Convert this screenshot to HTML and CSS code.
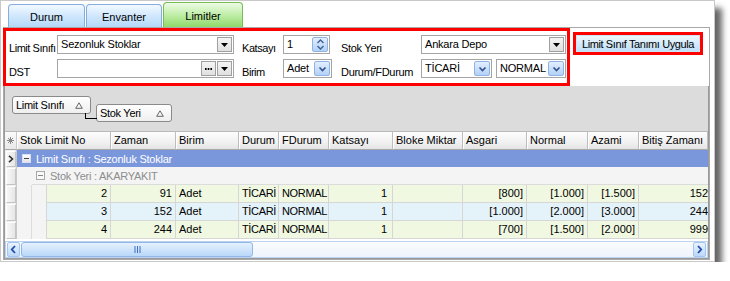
FILE: index.html
```html
<!DOCTYPE html>
<html lang="tr">
<head>
<meta charset="utf-8">
<title>Limitler</title>
<link rel="stylesheet" href="styles.css">
</head>
<body>
<div class="window">
  <div class="tabs">
    <div class="tab">Durum</div>
    <div class="tab">Envanter</div>
    <div class="tab active">Limitler</div>
  </div>
  <div class="page">
    <div class="toolbar">
      <div class="form hl">
        <span class="lbl">Limit Sınıfı</span>
        <div class="edit"><span class="val">Sezonluk Stoklar</span><span class="cbtn"><svg width="7" height="4" viewBox="0 0 7 4"><path d="M0 0H7L3.5 4Z" fill="#000"/></svg></span></div>
        <span class="lbl l2">Katsayı</span>
        <div class="edit spin"><span class="val">1</span><span class="xbtn"><svg width="9" height="13" viewBox="0 0 9 13"><path d="M1.5 5L4.5 2L7.5 5M1.5 8L4.5 11L7.5 8" fill="none" stroke="#3f5f9a" stroke-width="1.4"/></svg></span></div>
        <span class="lbl l3">Stok Yeri</span>
        <div class="edit"><span class="val">Ankara Depo</span><span class="cbtn"><svg width="7" height="4" viewBox="0 0 7 4"><path d="M0 0H7L3.5 4Z" fill="#000"/></svg></span></div>

        <span class="lbl">DST</span>
        <div class="edit"><span class="val"></span><span class="cbtn dots"><svg width="7" height="2" viewBox="0 0 7 2"><rect x="0" y="0" width="1.6" height="2" fill="#000"/><rect x="2.7" y="0" width="1.6" height="2" fill="#000"/><rect x="5.4" y="0" width="1.6" height="2" fill="#000"/></svg></span><span class="cbtn"><svg width="7" height="4" viewBox="0 0 7 4"><path d="M0 0H7L3.5 4Z" fill="#000"/></svg></span></div>
        <span class="lbl l2">Birim</span>
        <div class="edit adet"><span class="val">Adet</span><span class="xbtn"><svg width="9" height="6" viewBox="0 0 9 6"><path d="M1.5 1.5L4.5 4.5L7.5 1.5" fill="none" stroke="#2f4f8f" stroke-width="1.6"/></svg></span></div>
        <span class="lbl l3">Durum/FDurum</span>
        <div class="pair">
          <div class="edit ticari"><span class="val">TİCARİ</span><span class="xbtn"><svg width="9" height="6" viewBox="0 0 9 6"><path d="M1.5 1.5L4.5 4.5L7.5 1.5" fill="none" stroke="#2f4f8f" stroke-width="1.6"/></svg></span></div>
          <div class="edit normal"><span class="val">NORMAL</span><span class="xbtn"><svg width="9" height="6" viewBox="0 0 9 6"><path d="M1.5 1.5L4.5 4.5L7.5 1.5" fill="none" stroke="#2f4f8f" stroke-width="1.6"/></svg></span></div>
        </div>
      </div>
      <div class="hl btnbox"><div class="apply">Limit Sınıf Tanımı Uygula</div></div>
    </div>

    <div class="grid">
      <div class="grouppanel">
        <div class="gbox first"><span>Limit Sınıfı</span><svg width="8" height="7" viewBox="0 0 8 7"><path d="M4 0.8L7.3 6.3H0.7Z" fill="none" stroke="#666" stroke-width="1"/></svg></div>
        <div class="gbox second"><span>Stok Yeri</span><svg width="8" height="7" viewBox="0 0 8 7"><path d="M4 0.8L7.3 6.3H0.7Z" fill="none" stroke="#666" stroke-width="1"/></svg></div>
      </div>

      <div class="row hdr">
        <div class="ind"><svg width="7" height="7" viewBox="0 0 7 7"><path d="M3.5 0V7M0 3.5H7M1 1L6 6M6 1L1 6" stroke="#888" stroke-width="1"/></svg></div>
        <div class="c c1">Stok Limit No</div>
        <div class="c c2">Zaman</div>
        <div class="c c3">Birim</div>
        <div class="c c4">Durum</div>
        <div class="c c5">FDurum</div>
        <div class="c c6">Katsayı</div>
        <div class="c c7">Bloke Miktar</div>
        <div class="c c8">Asgari</div>
        <div class="c c9">Normal</div>
        <div class="c c10">Azami</div>
        <div class="c c11">Bitiş Zamanı</div>
      </div>

      <div class="row grp1">
        <div class="ind"><span class="ibtn"><svg width="6" height="8" viewBox="0 0 6 8"><path d="M1 0.8L4.5 4L1 7.2" fill="none" stroke="#333" stroke-width="1.6"/></svg></span></div>
        <div class="gcell"><span class="exp"></span>Limit Sınıfı : Sezonluk Stoklar</div>
      </div>

      <div class="row grp2">
        <div class="ind"><span class="ibtn"></span></div>
        <div class="indent"></div>
        <div class="gcell"><span class="exp"></span>Stok Yeri : AKARYAKIT</div>
      </div>

      <div class="row data green">
        <div class="ind"><span class="ibtn"></span></div>
        <div class="indent"></div><div class="indent"></div>
        <div class="c d1 r">2</div><div class="c c2 r">91</div><div class="c c3">Adet</div><div class="c c4">TİCARİ</div><div class="c c5">NORMAL</div><div class="c c6 r k">1</div><div class="c c7"></div><div class="c c8 r">[800]</div><div class="c c9 r">[1.000]</div><div class="c c10 r">[1.500]</div><div class="c c11 r e">152</div>
      </div>
      <div class="row data blue">
        <div class="ind"><span class="ibtn"></span></div>
        <div class="indent"></div><div class="indent"></div>
        <div class="c d1 r">3</div><div class="c c2 r">152</div><div class="c c3">Adet</div><div class="c c4">TİCARİ</div><div class="c c5">NORMAL</div><div class="c c6 r k">1</div><div class="c c7"></div><div class="c c8 r">[1.000]</div><div class="c c9 r">[2.000]</div><div class="c c10 r">[3.000]</div><div class="c c11 r e">244</div>
      </div>
      <div class="row data green">
        <div class="ind"><span class="ibtn"></span></div>
        <div class="indent"></div><div class="indent"></div>
        <div class="c d1 r">4</div><div class="c c2 r">244</div><div class="c c3">Adet</div><div class="c c4">TİCARİ</div><div class="c c5">NORMAL</div><div class="c c6 r k">1</div><div class="c c7"></div><div class="c c8 r">[700]</div><div class="c c9 r">[1.500]</div><div class="c c10 r">[2.000]</div><div class="c c11 r e">999</div>
      </div>

      <div class="hscroll">
        <div class="sbtn"><svg width="7" height="9" viewBox="0 0 7 9"><path d="M5 1L1.8 4.5L5 8" fill="none" stroke="#1d4fa8" stroke-width="1.8"/></svg></div>
        <div class="track">
          <div class="thumb"><svg width="7" height="7" viewBox="0 0 7 7"><path d="M1 0V7M3.5 0V7M6 0V7" stroke="#3a6fc4" stroke-width="1"/></svg></div>
        </div>
        <div class="sbtn"><svg width="7" height="9" viewBox="0 0 7 9"><path d="M2 1L5.2 4.5L2 8" fill="none" stroke="#1d4fa8" stroke-width="1.8"/></svg></div>
      </div>
    </div>
  </div>
</div>
</body>
</html>
```

FILE: styles.css
```css
* { box-sizing: border-box; }

body {
  margin: 0;
  background: #fff;
  font-family: "Liberation Sans", Arial, sans-serif;
  font-size: 11px;
  color: #000;
}

.window {
  width: 715px;
  height: 262px;
  background: #fff;
  border: 1px solid #c9c9c9;
  box-shadow: 7px 8px 6px rgba(0, 0, 0, 0.6);
}

/* tabs */
.tabs {
  display: flex;
  align-items: flex-end;
  height: 26px;
  padding-left: 7px;
}
.tab {
  height: 23px;
  margin-right: 1px;
  width: 77px;
  display: flex;
  align-items: center;
  justify-content: center;
  padding-top: 2px;
  font-size: 11px;
  border: 1px solid #86ade0;
  border-bottom: none;
  border-radius: 4px 4px 0 0;
  background: linear-gradient(#f2f9ff 0%, #d3e9fd 45%, #b3d8f8 100%);
}
.tab:nth-child(2) { width: 76px; }
.tab.active {
  width: 80px;
  height: 25px;
  border-color: #79bd58;
  background: linear-gradient(#eefbe6 0%, #c4efad 45%, #8fd96a 100%);
}

/* page */
.page {
  margin-left: 2px;
  width: 707px;
  height: 233px;
  border: 1px solid #a9a9a9;
  background: #fff;
}

.toolbar {
  display: flex;
  align-items: flex-start;
}

.hl { border: 3px solid #f00; }

.form {
  margin-left: -1px;
  width: 567px;
  height: 58px;
  display: grid;
  grid-template-columns: 48px 177px 49px 49px 89px 145px;
  grid-template-rows: 19px 19px;
  row-gap: 5px;
  padding: 4px 1px 5px 3px;
}

.lbl {
  padding-top: 7px;
  line-height: 13px;
  white-space: nowrap;
  letter-spacing: -0.45px;
}
.lbl.l2 { padding-left: 8px; }
.lbl.l3 { padding-left: 9px; letter-spacing: -0.3px; }

.edit {
  display: flex;
  align-items: center;
  height: 19px;
  border: 1px solid #a5a5a5;
  background: #fff;
  padding: 1px;
}
.edit .val {
  flex: 1;
  padding-left: 2px;
  line-height: 15px;
  white-space: nowrap;
  overflow: hidden;
  letter-spacing: -0.2px;
}
.spin { width: 47px; }
.adet { width: 49px; }
.pair { display: flex; gap: 4px; }
.ticari { width: 71px; }
.normal { width: 70px; }

.cbtn {
  width: 15px;
  height: 15px;
  margin-left: 1px;
  border: 1px solid #a0a0a0;
  background: linear-gradient(#f4f4f4, #e0e0e0);
  display: flex;
  align-items: center;
  justify-content: center;
}

.xbtn {
  width: 16px;
  height: 15px;
  border: 1px solid #8fb3e6;
  border-radius: 2px;
  background: linear-gradient(#e3effe, #b2d1f6);
  display: flex;
  align-items: center;
  justify-content: center;
}

.btnbox {
  margin-left: 3px;
  margin-top: 4px;
  width: 130px;
  height: 23px;
}
.apply {
  height: 17px;
  line-height: 17px;
  text-align: center;
  white-space: nowrap;
  letter-spacing: -0.4px;
  background: linear-gradient(#eef7fe 0%, #d6ebfb 50%, #bfe0f8 100%);
  border: 1px solid #cfe3f6;
}

/* grid */
.grid {
  width: 705px;
  height: 173px;
  border: 1px solid #9a9a9a;
  border-top: none;
  background: #fff;
}

.grouppanel {
  height: 46px;
  background: #dcdcdc;
  display: flex;
  align-items: flex-start;
  padding: 10px 0 0 7px;
  border-bottom: 1px solid #b9b9b9;
}
.gbox {
  position: relative;
  height: 18px;
  display: flex;
  align-items: center;
  justify-content: space-between;
  padding: 0 7px 0 3px;
  border: 1px solid #8a8a8a;
  border-radius: 3px;
  background: linear-gradient(#ffffff, #efefef);
  white-space: nowrap;
  letter-spacing: -0.3px;
}
.gbox.first { width: 79px; }
.gbox.second { width: 76px; margin-left: 5px; margin-top: 8px; }
.gbox.second::before {
  content: "";
  position: absolute;
  left: -12px;
  top: 8px;
  width: 11px;
  height: 5px;
  border-left: 1px solid #000;
  border-bottom: 1px solid #000;
}

.row {
  display: flex;
  height: 18px;
}
.ind {
  width: 12px;
  flex: none;
  display: flex;
  align-items: center;
  justify-content: center;
  background: #f0f0f0;
  border-right: 1px solid #c8c8c8;
}
.ibtn {
  width: 10px;
  height: 17px;
  margin-left: 1px;
  display: flex;
  align-items: center;
  justify-content: center;
  background: linear-gradient(90deg, #f7f7f7, #e6e6e6);
  border: 1px solid #c4c4c4;
  border-top-color: #fff;
  border-left-color: #fff;
}

.c {
  flex: none;
  height: 100%;
  padding: 0 3px;
  line-height: 17px;
  white-space: nowrap;
  overflow: hidden;
  border-right: 1px solid #d6d6d6;
  border-bottom: 1px solid #d6d6d6;
}
.c.r { text-align: right; }
.c.k { padding-right: 5px; }
.c.e { padding-right: 0; border-right: none; }

.c1 { width: 94px; }
.d1 { width: 64px; }
.c2 { width: 65px; }
.c3 { width: 63px; }
.c4 { width: 40px; }
.c5 { width: 50px; }
.c6 { width: 64px; }
.c7 { width: 70px; }
.c8 { width: 64px; }
.c9 { width: 61px; }
.c10 { width: 51px; }
.c11 { width: 69px; }

.data .c4, .data .c5 { letter-spacing: -0.35px; padding-left: 3px; padding-right: 0; }

.hdr .ind { background: linear-gradient(#fbfbfb, #e8e8e8); border-bottom: 1px solid #a9a9a9; }
.hdr .c {
  background: linear-gradient(#fdfdfd 0%, #f1f1f1 60%, #e4e4e4 100%);
  border-right: 1px solid #bdbdbd;
  border-bottom: 1px solid #a9a9a9;
  box-shadow: inset 1px 0 0 #fff;
  line-height: 17px;
  padding-left: 3px;
}

.grp1 { height: 17px; }
.grp1 .ind .ibtn { height: 16px; }
.gcell {
  flex: 1;
  display: flex;
  align-items: center;
  white-space: nowrap;
  letter-spacing: -0.25px;
}
.grp1 .gcell {
  background: #7a97dc;
  color: #fff;
  padding-left: 5px;
}
.exp {
  width: 9px;
  height: 9px;
  margin-right: 5px;
  border: 1px solid #9a9a9a;
  background: linear-gradient(#ffffff, #e4e4e4) ;
  position: relative;
}
.exp::after {
  content: "";
  position: absolute;
  left: 1px;
  top: 3px;
  width: 5px;
  height: 1px;
  background: #444;
}
.grp1 .exp { border-color: #d8dff2; }

.indent {
  width: 15px;
  flex: none;
  background: #f4f4f4;
  border-right: 1px solid #dcdcdc;
}
.grp2 .gcell {
  background: #f4f4f4;
  color: #8d8d8d;
  padding-left: 4px;
  border-bottom: 1px solid #dcdcdc;
}
.grp2 .indent { border-right: none; }
.grp2 .exp { border-color: #a8a8a8; background: #f8f8f8; }
.grp2 .exp::after { background: #888; }

.data .indent:first-of-type { border-right: 1px solid #d0d0d0; }
.data .indent + .indent { border-right: 1px solid #d6d6d6; }
.green .c { background: #f0f8e1; }
.blue .c { background: #e4f2f9; }

/* horizontal scrollbar */
.hscroll {
  margin-top: 2px;
  height: 17px;
  display: flex;
  align-items: center;
  padding: 0 1px 0 1px;
  border: 1px solid #bcd3f0;
  background: linear-gradient(#fafcff, #eef4fc);
}
.sbtn {
  width: 13px;
  height: 15px;
  display: flex;
  align-items: center;
  justify-content: center;
  border: 1px solid #a5c4ef;
  border-radius: 2px;
  background: linear-gradient(#e9f3fe, #bcd8f8);
}
.track {
  flex: 1;
  height: 15px;
  display: flex;
  padding: 0 1px;
}
.thumb {
  width: 232px;
  height: 15px;
  display: flex;
  align-items: center;
  justify-content: center;
  border: 1px solid #92b6e8;
  border-radius: 3px;
  background: linear-gradient(#e5f1fe 0%, #cfe4fb 50%, #b9d8f8 100%);
}
```
